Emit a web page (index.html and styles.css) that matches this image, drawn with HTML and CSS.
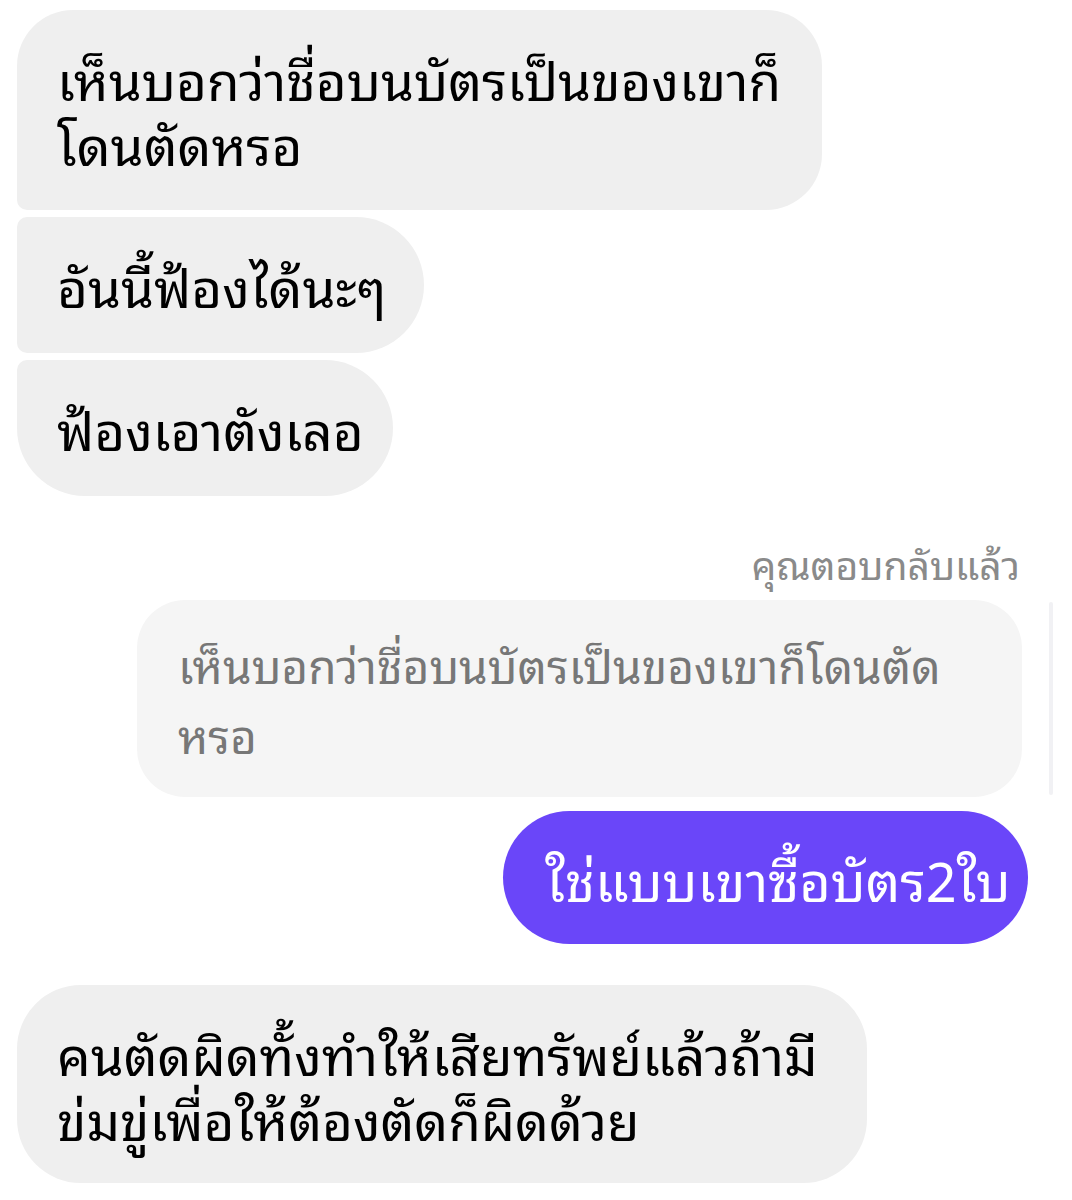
FILE: index.html
```html
<!DOCTYPE html>
<html lang="th">
<head>
<meta charset="utf-8">
<link rel="stylesheet" href="styles.css">
</head>
<body>
<div class="chat">
  <div class="msg in first w1">เห็นบอกว่าชื่อบนบัตรเป็นของเขาก็<br>โดนตัดหรอ</div>
  <div class="msg in middle w2">อันนี้ฟ้องได้นะๆ</div>
  <div class="msg in last w3">ฟ้องเอาตังเลอ</div>

  <div class="reply-label">คุณตอบกลับแล้ว</div>
  <div class="reply-row">
    <div class="quote">เห็นบอกว่าชื่อบนบัตรเป็นของเขาก็โดนตัด<br>หรอ</div>
    <div class="quote-bar"></div>
  </div>
  <div class="msg out">ใช่แบบเขาซื้อบัตร2ใบ</div>

  <div class="msg in single w4">คนตัดผิดทั้งทำให้เสียทรัพย์แล้วถ้ามี<br>ข่มขู่เพื่อให้ต้องตัดก็ผิดด้วย</div>
</div>
</body>
</html>
```

FILE: styles.css
```css
html, body {
  margin: 0;
  padding: 0;
  background: #ffffff;
}

body {
  font-family: "Noto Sans Thai Looped", "Noto Looped Thai", "Noto Looped Thai UI", "Loma", "Garuda", "Waree", "Sarabun", "Tlwg Typo", "Noto Sans Thai", "Noto Sans", sans-serif;
  color: #000000;
}

.chat {
  display: flex;
  flex-direction: column;
  padding-top: 10px;
}

.msg {
  box-sizing: border-box;
  font-size: 53px;
  line-height: 65px;
  padding: 35px 40px;
  white-space: nowrap;
}

.in {
  align-self: flex-start;
  margin-left: 17px;
  background: #efefef;
  color: #000;
  margin-bottom: 7px;
}

.first {
  border-radius: 56px 56px 56px 10px;
  height: 200px;
}

.middle {
  border-radius: 10px 68px 68px 10px;
  height: 136px;
}

.last {
  border-radius: 10px 68px 68px 68px;
  height: 136px;
}

.single {
  border-radius: 64px;
  height: 198px;
}

.w1 { width: 805px; }
.w2 { width: 407px; }
.w3 { width: 376px; }
.w4 { width: 850px; margin-top: 41px; }

.reply-label {
  align-self: flex-end;
  margin-top: 40px;
  margin-right: 52px;
  font-size: 39px;
  line-height: 40px;
  color: #8a8a8a;
}

.reply-row {
  display: flex;
  justify-content: flex-end;
  align-items: stretch;
  gap: 27px;
  margin-top: 17px;
  margin-right: 19px;
}

.quote {
  box-sizing: border-box;
  width: 885px;
  height: 197px;
  background: #f5f5f5;
  color: #777777;
  font-size: 46px;
  line-height: 70px;
  padding: 28px 40px 29px 41px;
  border-radius: 48px;
  white-space: nowrap;
}

.quote-bar {
  width: 4px;
  background: #f1f1f4;
  border-radius: 2px;
  margin: 2px 0;
}

.out {
  align-self: flex-end;
  width: 525px;
  height: 133px;
  margin-right: 44px;
  margin-top: 14px;
  background: #6a46f9;
  color: #ffffff;
  border-radius: 68px;
  font-size: 54px;
  padding: 34px 42px 34px 42px;
}
```
